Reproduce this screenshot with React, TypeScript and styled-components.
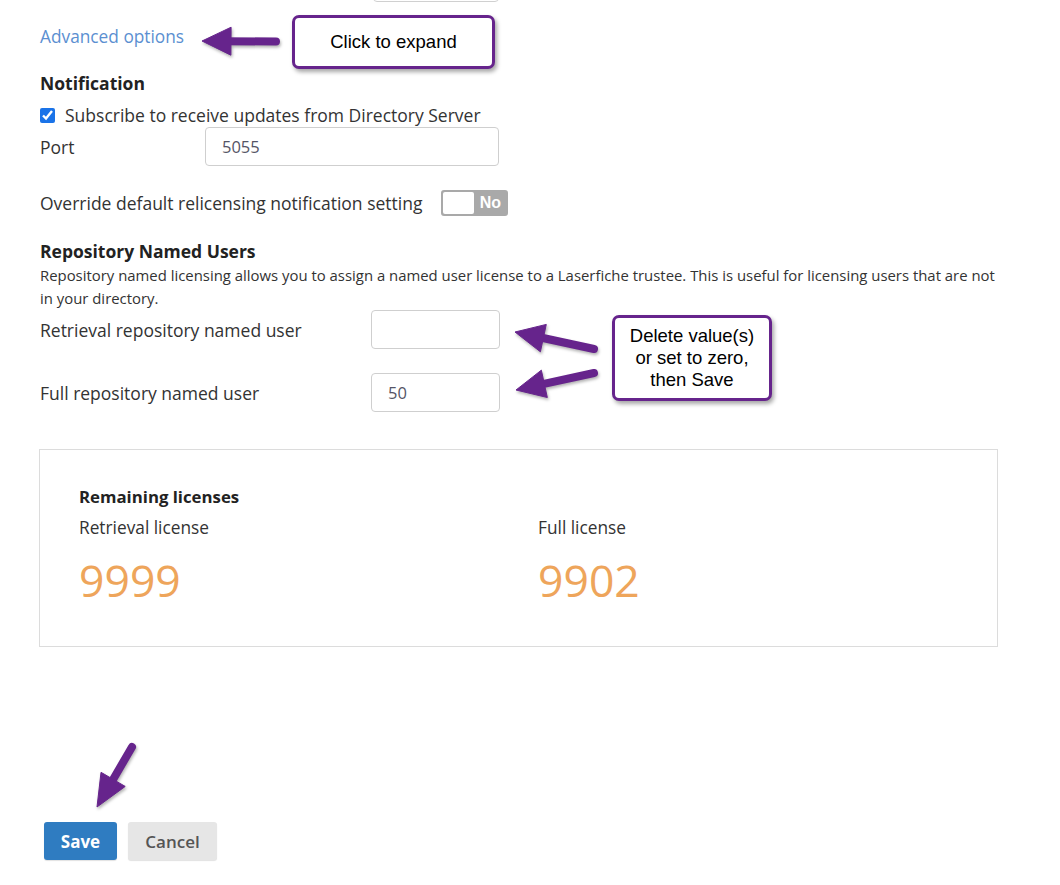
import React from "react";
import styled, { createGlobalStyle } from "styled-components";

const Global = createGlobalStyle`
  html, body { margin: 0; padding: 0; background: #ffffff; }
  body { font-family: "Open Sans", "Noto Sans", sans-serif; color: #333333; }
  * { box-sizing: border-box; }
`;

const Page = styled.div`
  position: relative;
  width: 1060px;
  min-height: 885px;
  padding-left: 40px;
  overflow: hidden;
`;

const Form = styled.div`
  display: flex;
  flex-direction: column;
  width: 958px;
`;

const StubInput = styled.div`
  margin-left: 333px;
  margin-top: -38px;
  width: 126px;
  height: 40px;
  border: 1px solid #d0d0d0;
  border-radius: 4px;
`;

const LinkText = styled.a`
  margin-top: 23px;
  font-size: 17.3px;
  line-height: 24px;
  color: #5b8fd1;
  text-decoration: none;
  align-self: flex-start;
  cursor: pointer;
`;

const Heading = styled.div<{ $top: number }>`
  margin-top: ${(p) => p.$top}px;
  font-size: 17.5px;
  line-height: 24px;
  font-weight: 700;
  color: #222222;
`;

const CheckRow = styled.label`
  margin-top: 8px;
  display: flex;
  align-items: center;
  gap: 10px;
  font-size: 17.5px;
  line-height: 24px;
`;

const Check = styled.input`
  margin: 0;
  width: 15px;
  height: 15px;
  accent-color: #1a73e8;
`;

const FieldRow = styled.div<{ $top: number; $labelWidth: number }>`
  margin-top: ${(p) => p.$top}px;
  display: grid;
  grid-template-columns: ${(p) => p.$labelWidth}px auto;
  align-items: center;
  justify-content: start;
`;

const Label = styled.span`
  font-size: 17.5px;
  line-height: 24px;
  color: #333333;
`;

const TextInput = styled.input<{ $width: number }>`
  width: ${(p) => p.$width}px;
  height: 39px;
  margin: 0;
  padding: 0 16px;
  border: 1px solid #cfcfcf;
  border-radius: 4px;
  font-family: "Open Sans", sans-serif;
  font-size: 16.5px;
  color: #555566;
  background: #fff;
  outline: none;
`;

const SwitchRow = styled.div`
  margin-top: 24px;
  display: flex;
  align-items: center;
  gap: 19px;
  height: 26px;
`;

const Toggle = styled.div`
  width: 67px;
  height: 26px;
  border: 2px solid #a9a9a9;
  border-radius: 3px;
  background: #a9a9a9;
  display: flex;
  align-items: center;
`;

const Knob = styled.div`
  width: 31px;
  height: 22px;
  background: #ffffff;
  border-radius: 2px;
`;

const ToggleText = styled.span`
  flex: 1;
  text-align: center;
  font-family: "Liberation Sans", Arial, sans-serif;
  font-weight: 700;
  font-size: 16px;
  color: #ffffff;
`;

const Description = styled.p`
  margin: 1px 0 0;
  font-size: 14.9px;
  line-height: 23px;
  color: #333333;
  width: 962px;
`;

const Panel = styled.div`
  margin-top: 37px;
  margin-left: -1px;
  width: 959px;
  height: 198px;
  border: 1px solid #dcdcdc;
  padding: 35px 39px 0;
`;

const PanelTitle = styled.div`
  font-size: 16.8px;
  line-height: 24px;
  font-weight: 700;
  color: #222222;
`;

const Stats = styled.div`
  margin-top: 7px;
  display: grid;
  grid-template-columns: 459px 1fr;
`;

const Stat = styled.div`
  display: flex;
  flex-direction: column;
`;

const StatLabel = styled.span`
  font-size: 17.3px;
  line-height: 24px;
  color: #333333;
`;

const StatValue = styled.span`
  margin-top: 14px;
  font-size: 44.5px;
  line-height: 52px;
  color: #eea55b;
`;

const Buttons = styled.div`
  margin-top: 175px;
  margin-left: 4px;
  display: flex;
  gap: 11px;
`;

const Button = styled.button<{ $primary?: boolean; $width: number }>`
  width: ${(p) => p.$width}px;
  height: 38px;
  margin: 0;
  border: none;
  border-radius: 3px;
  font-family: "Open Sans", sans-serif;
  font-size: 17px;
  font-weight: ${(p) => (p.$primary ? 700 : 600)};
  color: ${(p) => (p.$primary ? "#ffffff" : "#555555")};
  background: ${(p) => (p.$primary ? "#2f7cc1" : "#e6e6e6")};
  box-shadow: 0 1px 1px rgba(0, 0, 0, 0.12);
  cursor: pointer;
`;

/* Annotation overlays */
const Callout = styled.div<{ $x: number; $y: number; $w: number; $h: number }>`
  position: absolute;
  left: ${(p) => p.$x}px;
  top: ${(p) => p.$y}px;
  width: ${(p) => p.$w}px;
  height: ${(p) => p.$h}px;
  border: 3px solid #66248c;
  border-radius: 7px;
  background: #ffffff;
  box-shadow: 2px 3px 4px rgba(0, 0, 0, 0.35);
  display: flex;
  align-items: center;
  justify-content: center;
  text-align: center;
  font-family: "Liberation Sans", Arial, sans-serif;
  font-size: 18.5px;
  line-height: 22px;
  color: #000000;
`;

const Overlay = styled.svg`
  position: absolute;
  left: 0;
  top: 0;
  pointer-events: none;
  filter: drop-shadow(1px 2px 1.5px rgba(0, 0, 0, 0.3));
`;

type ArrowProps = { tail: [number, number]; tip: [number, number]; head?: number; width?: number; stroke?: number };

const Arrow = ({ tail, tip, head = 29, width = 28, stroke = 8 }: ArrowProps) => {
  const dx = tip[0] - tail[0];
  const dy = tip[1] - tail[1];
  const len = Math.hypot(dx, dy);
  const ux = dx / len;
  const uy = dy / len;
  const nx = -uy;
  const ny = ux;
  const bx = tip[0] - ux * head;
  const by = tip[1] - uy * head;
  const p1 = `${bx + (nx * width) / 2},${by + (ny * width) / 2}`;
  const p2 = `${bx - (nx * width) / 2},${by - (ny * width) / 2}`;
  const sx = tip[0] - ux * head * 0.7;
  const sy = tip[1] - uy * head * 0.7;
  return (
    <g fill="#66248c" stroke="#66248c">
      <line x1={tail[0]} y1={tail[1]} x2={sx} y2={sy} strokeWidth={stroke} strokeLinecap="round" />
      <polygon points={`${tip[0]},${tip[1]} ${p1} ${p2}`} strokeWidth={1} strokeLinejoin="round" />
    </g>
  );
};

export default function App() {
  return (
    <Page>
      <Global />
      <Form>
        <StubInput />
        <LinkText>Advanced options</LinkText>
        <Heading $top={22}>Notification</Heading>
        <CheckRow>
          <Check type="checkbox" defaultChecked />
          Subscribe to receive updates from Directory Server
        </CheckRow>
        <FieldRow $top={0} $labelWidth={165}>
          <Label>Port</Label>
          <TextInput $width={294} defaultValue="5055" />
        </FieldRow>
        <SwitchRow>
          <Label>Override default relicensing notification setting</Label>
          <Toggle>
            <Knob />
            <ToggleText>No</ToggleText>
          </Toggle>
        </SwitchRow>
        <Heading $top={23}>Repository Named Users</Heading>
        <Description>
          Repository named licensing allows you to assign a named user license to a Laserfiche trustee. This is useful for
          licensing users that are not in your directory.
        </Description>
        <FieldRow $top={0} $labelWidth={331}>
          <Label>Retrieval repository named user</Label>
          <TextInput $width={129} defaultValue="" />
        </FieldRow>
        <FieldRow $top={24} $labelWidth={331}>
          <Label>Full repository named user</Label>
          <TextInput $width={129} defaultValue="50" />
        </FieldRow>
        <Panel>
          <PanelTitle>Remaining licenses</PanelTitle>
          <Stats>
            <Stat>
              <StatLabel>Retrieval license</StatLabel>
              <StatValue>9999</StatValue>
            </Stat>
            <Stat>
              <StatLabel>Full license</StatLabel>
              <StatValue>9902</StatValue>
            </Stat>
          </Stats>
        </Panel>
        <Buttons>
          <Button $primary $width={73}>Save</Button>
          <Button $width={89}>Cancel</Button>
        </Buttons>
      </Form>

      <Overlay width={1060} height={885} viewBox="0 0 1060 885">
        <Arrow tail={[276, 41.5]} tip={[202, 41]} />
        <Arrow tail={[594, 349]} tip={[515, 332]} />
        <Arrow tail={[594, 373]} tip={[516, 390]} />
        <Arrow tail={[132, 747]} tip={[97, 807]} head={32} />
      </Overlay>
      <Callout $x={292} $y={15} $w={203} $h={54}>Click to expand</Callout>
      <Callout $x={612} $y={315} $w={160} $h={86}>
        Delete value(s)
        <br />
        or set to zero,
        <br />
        then Save
      </Callout>
    </Page>
  );
}
